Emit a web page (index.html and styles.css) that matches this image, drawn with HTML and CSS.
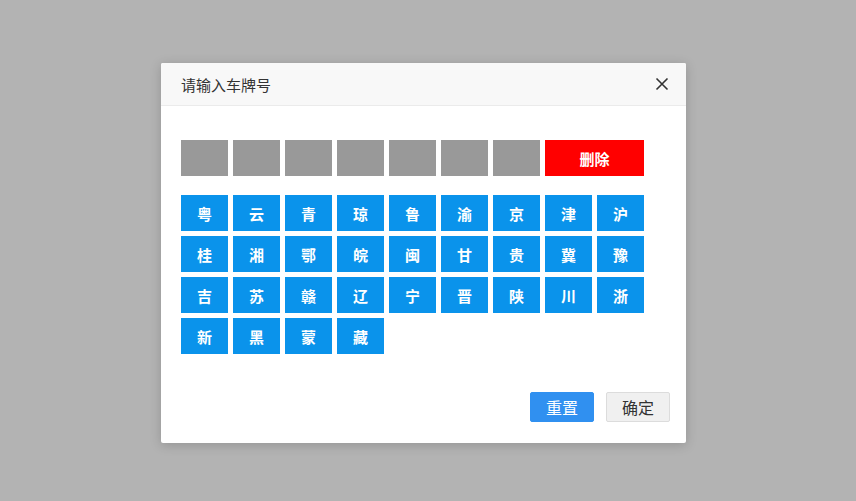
FILE: index.html
```html
<!DOCTYPE html>
<html lang="zh">
<head>
<meta charset="utf-8">
<link rel="stylesheet" href="styles.css">
</head>
<body>
<div class="overlay">
  <div class="dialog">
    <div class="header">
      <span class="title">请输入车牌号</span>
      <span class="close">
        <svg width="14" height="14" viewBox="0 0 14 14"><path d="M1.5 1.5 L12.5 12.5 M12.5 1.5 L1.5 12.5" stroke="#333" stroke-width="1.6" fill="none"/></svg>
      </span>
    </div>
    <div class="body">
      <div class="slots">
        <div class="slot"></div><div class="slot"></div><div class="slot"></div><div class="slot"></div><div class="slot"></div><div class="slot"></div><div class="slot"></div>
        <div class="del">删除</div>
      </div>
      <div class="keys">
        <div class="key">粤</div><div class="key">云</div><div class="key">青</div><div class="key">琼</div><div class="key">鲁</div><div class="key">渝</div><div class="key">京</div><div class="key">津</div><div class="key">沪</div>
        <div class="key">桂</div><div class="key">湘</div><div class="key">鄂</div><div class="key">皖</div><div class="key">闽</div><div class="key">甘</div><div class="key">贵</div><div class="key">冀</div><div class="key">豫</div>
        <div class="key">吉</div><div class="key">苏</div><div class="key">赣</div><div class="key">辽</div><div class="key">宁</div><div class="key">晋</div><div class="key">陕</div><div class="key">川</div><div class="key">浙</div>
        <div class="key">新</div><div class="key">黑</div><div class="key">蒙</div><div class="key">藏</div>
      </div>
    </div>
    <div class="footer">
      <button class="btn primary">重置</button>
      <button class="btn default">确定</button>
    </div>
  </div>
</div>
</body>
</html>
```
FILE: styles.css
```css
html, body {
  margin: 0;
  padding: 0;
  height: 100%;
}
body {
  background: #b3b3b3;
  font-family: "Noto Sans CJK SC", "Noto Sans", sans-serif;
}
.overlay {
  height: 100%;
  display: flex;
  justify-content: flex-start;
  padding: 63px 0 0 161px;
  box-sizing: border-box;
}
.dialog {
  width: 525px;
  height: 380px;
  background: #fff;
  border-radius: 2px;
  box-shadow: 0 2px 12px rgba(0,0,0,0.18);
  display: flex;
  flex-direction: column;
}
.header {
  height: 42px;
  border-bottom: 1px solid #ebebeb;
  background: #f8f8f8;
  border-radius: 2px 2px 0 0;
  display: flex;
  align-items: center;
  justify-content: space-between;
  padding: 0 17px 0 20px;
}
.title {
  font-size: 15px;
  color: #333;
  line-height: 1;
}
.close {
  display: flex;
  width: 14px;
  height: 14px;
}
.body {
  padding: 34px 20px 0 20px;
  flex: 1;
}
.slots {
  display: flex;
  gap: 5px;
}
.slot {
  width: 47px;
  height: 36px;
  background: #999;
}
.del {
  width: 99px;
  height: 36px;
  background: #ff0000;
  color: #fff;
  font-size: 15px;
  font-weight: bold;
  display: flex;
  align-items: center;
  justify-content: center;
}
.keys {
  margin-top: 19px;
  display: grid;
  grid-template-columns: repeat(9, 47px);
  grid-auto-rows: 36px;
  gap: 5px;
}
.key {
  background: #0a93eb;
  color: #fff;
  font-size: 15px;
  font-weight: bold;
  display: flex;
  align-items: center;
  justify-content: center;
}
.footer {
  display: flex;
  justify-content: flex-end;
  gap: 12px;
  padding: 0 16px 21px 0;
}
.btn {
  width: 64px;
  height: 30px;
  font-family: "Noto Sans CJK SC", "Noto Sans", sans-serif;
  font-size: 16px;
  border-radius: 2px;
  padding: 0;
  display: flex;
  align-items: center;
  justify-content: center;
}
.primary {
  background: #3090f0;
  border: 1px solid #3090f0;
  color: #fff;
}
.default {
  background: #f0f0f0;
  border: 1px solid #dcdcdc;
  color: #333;
}
```
